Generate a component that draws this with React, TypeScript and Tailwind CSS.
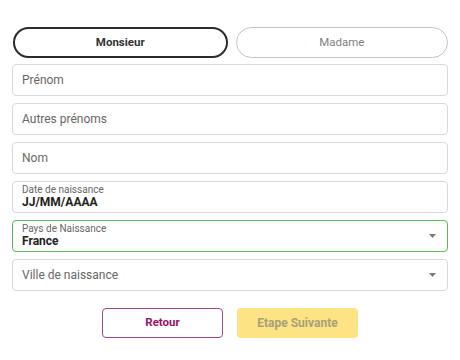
import React, { useState } from 'react';

const Caret = () => (
  <svg width="7" height="4" viewBox="0 0 7 4" className="mr-[1px] shrink-0">
    <path d="M0 0 L7 0 L3.5 4 Z" fill="#7a7a7a" />
  </svg>
);

interface FieldProps {
  label: string;
  value?: string;
  select?: boolean;
  focused?: boolean;
}

const Field: React.FC<FieldProps> = ({ label, value, select, focused }) => (
  <div
    className={
      'flex h-[32px] items-center rounded-[4px] border bg-white pl-[9px] pr-[10px] ' +
      (focused ? 'border-[#5cb85c]' : 'border-[#d9d9d9]')
    }
  >
    <div className="flex min-w-0 flex-1 flex-col justify-center">
      {value ? (
        <>
          <span className="text-[10px] leading-[11px] text-[#666]">{label}</span>
          <span className="text-[12px] font-bold leading-[15px] text-[#222]">{value}</span>
        </>
      ) : (
        <span className="text-[12px] text-[#666]">{label}</span>
      )}
    </div>
    {select && <Caret />}
  </div>
);

export default function App() {
  const [civ, setCiv] = useState<'M' | 'F'>('M');

  return (
    <div className="min-h-screen bg-white font-['Roboto',sans-serif]">
      <div className="flex w-[460px] flex-col px-[12px] pt-[27px]">
        <div className="flex gap-[8px] pl-[1px]">
          <button
            onClick={() => setCiv('M')}
            className={
              'h-[31px] flex-1 rounded-full text-[11.5px] ' +
              (civ === 'M'
                ? 'border-2 border-[#2b2b2b] font-bold text-[#333]'
                : 'border-[1.5px] border-[#c4c4c4] text-[#808080]')
            }
          >
            Monsieur
          </button>
          <button
            onClick={() => setCiv('F')}
            className={
              'h-[31px] flex-1 rounded-full text-[11.5px] ' +
              (civ === 'F'
                ? 'border-2 border-[#2b2b2b] font-bold text-[#333]'
                : 'border-[1.5px] border-[#c4c4c4] text-[#808080]')
            }
          >
            Madame
          </button>
        </div>

        <div className="mt-[6px] flex flex-col gap-[7px]">
          <Field label="Prénom" />
          <Field label="Autres prénoms" />
          <Field label="Nom" />
          <Field label="Date de naissance" value="JJ/MM/AAAA" />
          <Field label="Pays de Naissance" value="France" select focused />
          <Field label="Ville de naissance" select />
        </div>

        <div className="mt-[17px] flex justify-center gap-[14px]">
          <button className="h-[30px] w-[121px] rounded-[4px] border border-[#a3468f] bg-white text-[11.5px] font-bold text-[#9c0f61]">
            Retour
          </button>
          <button className="h-[30px] w-[121px] rounded-[4px] bg-[#fde384] text-[12px] font-bold text-[#a8a078]">
            Etape Suivante
          </button>
        </div>
      </div>
    </div>
  );
}
